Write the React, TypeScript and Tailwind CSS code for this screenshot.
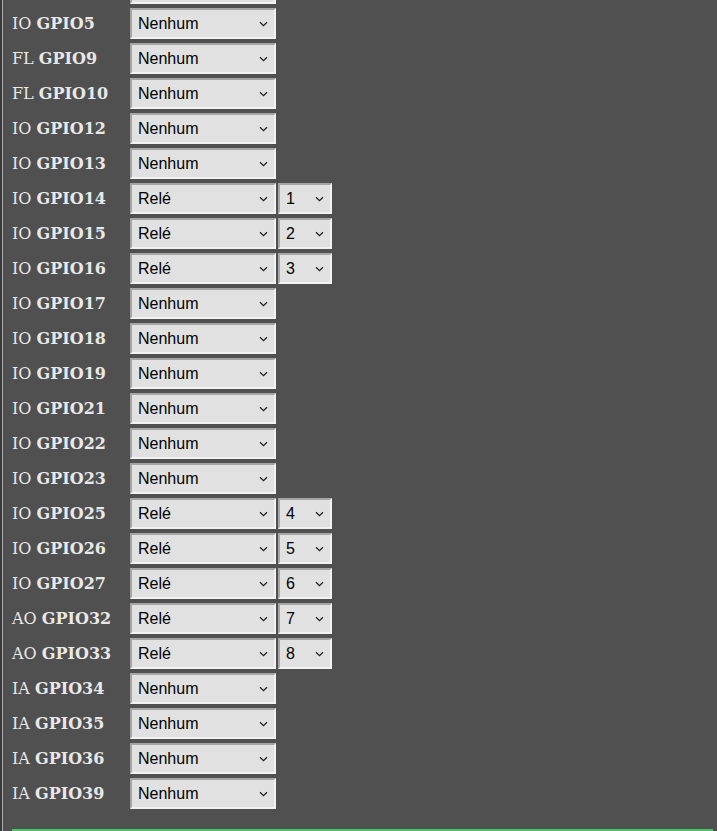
import React from "react";

type Row = { pre: string; pin: string; val: string; relay?: string };

const rows: Row[] = [
  { pre: "IO", pin: "GPIO5", val: "Nenhum" },
  { pre: "FL", pin: "GPIO9", val: "Nenhum" },
  { pre: "FL", pin: "GPIO10", val: "Nenhum" },
  { pre: "IO", pin: "GPIO12", val: "Nenhum" },
  { pre: "IO", pin: "GPIO13", val: "Nenhum" },
  { pre: "IO", pin: "GPIO14", val: "Relé", relay: "1" },
  { pre: "IO", pin: "GPIO15", val: "Relé", relay: "2" },
  { pre: "IO", pin: "GPIO16", val: "Relé", relay: "3" },
  { pre: "IO", pin: "GPIO17", val: "Nenhum" },
  { pre: "IO", pin: "GPIO18", val: "Nenhum" },
  { pre: "IO", pin: "GPIO19", val: "Nenhum" },
  { pre: "IO", pin: "GPIO21", val: "Nenhum" },
  { pre: "IO", pin: "GPIO22", val: "Nenhum" },
  { pre: "IO", pin: "GPIO23", val: "Nenhum" },
  { pre: "IO", pin: "GPIO25", val: "Relé", relay: "4" },
  { pre: "IO", pin: "GPIO26", val: "Relé", relay: "5" },
  { pre: "IO", pin: "GPIO27", val: "Relé", relay: "6" },
  { pre: "AO", pin: "GPIO32", val: "Relé", relay: "7" },
  { pre: "AO", pin: "GPIO33", val: "Relé", relay: "8" },
  { pre: "IA", pin: "GPIO34", val: "Nenhum" },
  { pre: "IA", pin: "GPIO35", val: "Nenhum" },
  { pre: "IA", pin: "GPIO36", val: "Nenhum" },
  { pre: "IA", pin: "GPIO39", val: "Nenhum" },
];

function Chevron() {
  return (
    <svg width="9" height="6" viewBox="0 0 9 6" className="shrink-0">
      <path d="M1 1.2 L4.5 4.6 L8 1.2" fill="none" stroke="#222" strokeWidth="1.3" />
    </svg>
  );
}

function Sel({ value, w }: { value: string; w: string }) {
  return (
    <div
      className={`${w} h-[31px] flex items-center justify-between pl-[6px] pr-[6px] bg-[#e1e1e1] border-2 border-t-[#a5a5a5] border-l-[#a5a5a5] border-b-[#f2f2f2] border-r-[#f2f2f2] text-[16px] text-black`}
      style={{ fontFamily: '"Liberation Sans", Arial, sans-serif' }}
    >
      <span>{value}</span>
      <Chevron />
    </div>
  );
}

export default function App() {
  return (
    <div className="w-[717px] h-[831px] overflow-hidden bg-[#505050] relative">
      <div className="absolute left-0 top-0 bottom-0 w-[2px] bg-[#3a3a3a]" />
      <div className="absolute left-[2px] top-0 bottom-0 w-px bg-[#a8a8a8]" />
      <div className="flex flex-col h-full">
        <div className="flex flex-col gap-[4px] mt-[-27px]">
          <div className="flex items-center h-[31px]">
            <div className="w-[130px]" />
            <div className="w-[146px] h-[31px] bg-[#e1e1e1] border-2 border-t-[#a5a5a5] border-l-[#a5a5a5] border-b-[#f2f2f2] border-r-[#f2f2f2]" />
          </div>
          {rows.map((r) => (
            <div key={r.pin} className="flex items-center h-[31px]">
              <div
                className="w-[130px] pl-[12px] text-[16px] text-[#e8e8e8] whitespace-nowrap"
                style={{ fontFamily: '"DejaVu Serif", "Liberation Serif", serif' }}
              >
                {r.pre} <b>{r.pin}</b>
              </div>
              <Sel value={r.val} w="w-[146px]" />
              {r.relay && (
                <div className="ml-[2px]">
                  <Sel value={r.relay} w="w-[54px]" />
                </div>
              )}
            </div>
          ))}
        </div>
        <div className="mt-auto ml-[12px] mr-[4px] h-[2px] bg-[#4cc06a]" />
      </div>
    </div>
  );
}
